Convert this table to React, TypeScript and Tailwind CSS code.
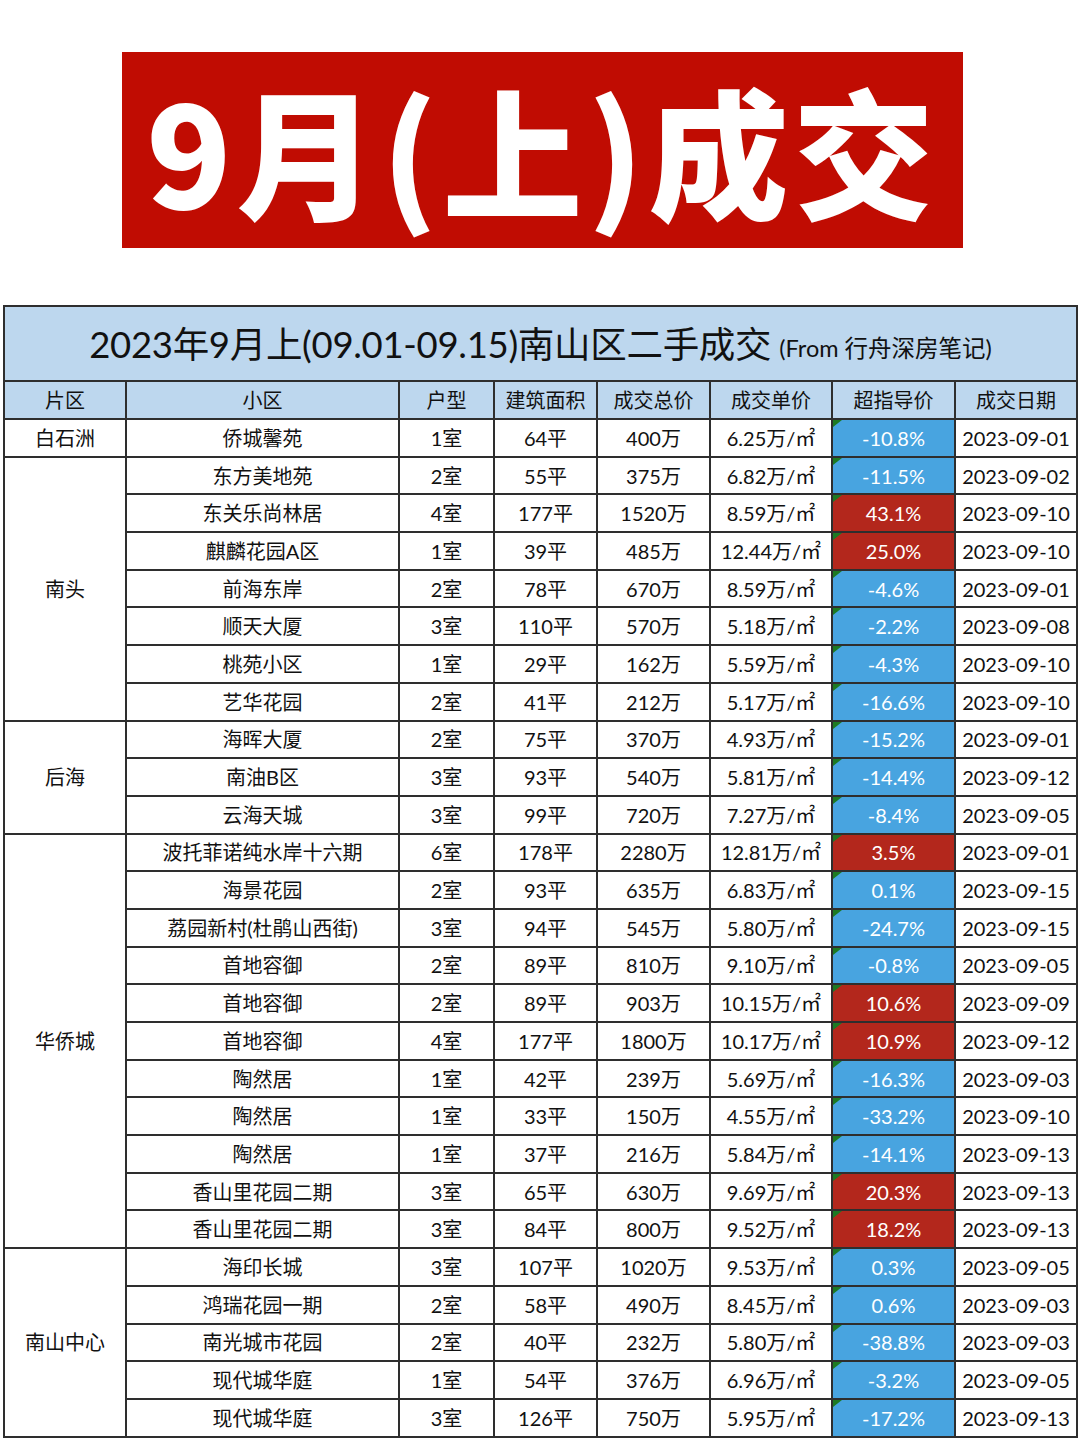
import React from "react";

type Row = [string, string, string, string, string, string, boolean, string];

const groups: { name: string; span: string; rows: Row[] }[] = [
  {
    name: "白石洲",
    span: "row-span-1",
    rows: [["侨城馨苑", "1室", "64平", "400万", "6.25万/㎡", "-10.8%", false, "2023-09-01"]],
  },
  {
    name: "南头",
    span: "row-span-7",
    rows: [
      ["东方美地苑", "2室", "55平", "375万", "6.82万/㎡", "-11.5%", false, "2023-09-02"],
      ["东关乐尚林居", "4室", "177平", "1520万", "8.59万/㎡", "43.1%", true, "2023-09-10"],
      ["麒麟花园A区", "1室", "39平", "485万", "12.44万/㎡", "25.0%", true, "2023-09-10"],
      ["前海东岸", "2室", "78平", "670万", "8.59万/㎡", "-4.6%", false, "2023-09-01"],
      ["顺天大厦", "3室", "110平", "570万", "5.18万/㎡", "-2.2%", false, "2023-09-08"],
      ["桃苑小区", "1室", "29平", "162万", "5.59万/㎡", "-4.3%", false, "2023-09-10"],
      ["艺华花园", "2室", "41平", "212万", "5.17万/㎡", "-16.6%", false, "2023-09-10"],
    ],
  },
  {
    name: "后海",
    span: "row-span-3",
    rows: [
      ["海晖大厦", "2室", "75平", "370万", "4.93万/㎡", "-15.2%", false, "2023-09-01"],
      ["南油B区", "3室", "93平", "540万", "5.81万/㎡", "-14.4%", false, "2023-09-12"],
      ["云海天城", "3室", "99平", "720万", "7.27万/㎡", "-8.4%", false, "2023-09-05"],
    ],
  },
  {
    name: "华侨城",
    span: "row-span-11",
    rows: [
      ["波托菲诺纯水岸十六期", "6室", "178平", "2280万", "12.81万/㎡", "3.5%", true, "2023-09-01"],
      ["海景花园", "2室", "93平", "635万", "6.83万/㎡", "0.1%", false, "2023-09-15"],
      ["荔园新村(杜鹃山西街)", "3室", "94平", "545万", "5.80万/㎡", "-24.7%", false, "2023-09-15"],
      ["首地容御", "2室", "89平", "810万", "9.10万/㎡", "-0.8%", false, "2023-09-05"],
      ["首地容御", "2室", "89平", "903万", "10.15万/㎡", "10.6%", true, "2023-09-09"],
      ["首地容御", "4室", "177平", "1800万", "10.17万/㎡", "10.9%", true, "2023-09-12"],
      ["陶然居", "1室", "42平", "239万", "5.69万/㎡", "-16.3%", false, "2023-09-03"],
      ["陶然居", "1室", "33平", "150万", "4.55万/㎡", "-33.2%", false, "2023-09-10"],
      ["陶然居", "1室", "37平", "216万", "5.84万/㎡", "-14.1%", false, "2023-09-13"],
      ["香山里花园二期", "3室", "65平", "630万", "9.69万/㎡", "20.3%", true, "2023-09-13"],
      ["香山里花园二期", "3室", "84平", "800万", "9.52万/㎡", "18.2%", true, "2023-09-13"],
    ],
  },
  {
    name: "南山中心",
    span: "row-span-5",
    rows: [
      ["海印长城", "3室", "107平", "1020万", "9.53万/㎡", "0.3%", false, "2023-09-05"],
      ["鸿瑞花园一期", "2室", "58平", "490万", "8.45万/㎡", "0.6%", false, "2023-09-03"],
      ["南光城市花园", "2室", "40平", "232万", "5.80万/㎡", "-38.8%", false, "2023-09-03"],
      ["现代城华庭", "1室", "54平", "376万", "6.96万/㎡", "-3.2%", false, "2023-09-05"],
      ["现代城华庭", "3室", "126平", "750万", "5.95万/㎡", "-17.2%", false, "2023-09-13"],
    ],
  },
];

const headers = ["片区", "小区", "户型", "建筑面积", "成交总价", "成交单价", "超指导价", "成交日期"];

const cell = "flex items-center justify-center border-r-2 border-b-2 border-[#2e2e2e]";

export default function App() {
  return (
    <div
      className="w-[1080px] h-[1439px] bg-white overflow-hidden"
      style={{ fontFamily: 'Lato, "Noto Sans CJK SC", sans-serif' }}
    >
      <div className="pt-[52px] pl-[122px]">
        <div
          className="w-[841px] h-[196px] bg-[#c00c02] flex items-center justify-center text-white text-[140px] font-black leading-none tracking-[5px]"
          style={{ fontFamily: '"Noto Sans CJK SC", sans-serif' }}
        >
          <span className="-mt-[4px]">9月(上)成交</span>
        </div>
      </div>

      <div className="mt-[57px] ml-[3px] w-[1075px] border-l-2 border-t-2 border-[#2e2e2e] grid grid-cols-[122px_273px_95px_103px_113px_122px_123px_122px] grid-rows-[75px_38px_repeat(27,37.7px)] text-[20px] text-[#111]">
        <div className={`${cell} col-span-8 bg-[#bdd7ee] pt-[2px]`}>
          <span className="text-[36.5px] tracking-[-0.3px]">2023年9月上(09.01-09.15)南山区二手成交</span>
          <span className="text-[23.5px] ml-[8px] mt-[8px]">(From 行舟深房笔记)</span>
        </div>
        {headers.map((h) => (
          <div key={h} className={`${cell} bg-[#bdd7ee]`}>
            {h}
          </div>
        ))}
        {groups.map((g) => (
          <React.Fragment key={g.name}>
            <div className={`${cell} col-start-1 ${g.span}`}>{g.name}</div>
            {g.rows.map((r, i) => (
              <React.Fragment key={i}>
                <div className={`${cell} col-start-2`}>{r[0]}</div>
                <div className={cell}>{r[1]}</div>
                <div className={cell}>{r[2]}</div>
                <div className={cell}>{r[3]}</div>
                <div className={cell}>{r[4]}</div>
                <div
                  className={`${cell} relative text-white ${r[6] ? "bg-[#b3271c]" : "bg-[#48a4e0]"}`}
                >
                  <svg className="absolute left-0 top-0" width="9" height="7" viewBox="0 0 9 7">
                    <polygon points="0,0 9,0 0,7" fill="#1d7a23" />
                  </svg>
                  {r[5]}
                </div>
                <div className={cell}>{r[7]}</div>
              </React.Fragment>
            ))}
          </React.Fragment>
        ))}
      </div>
    </div>
  );
}
